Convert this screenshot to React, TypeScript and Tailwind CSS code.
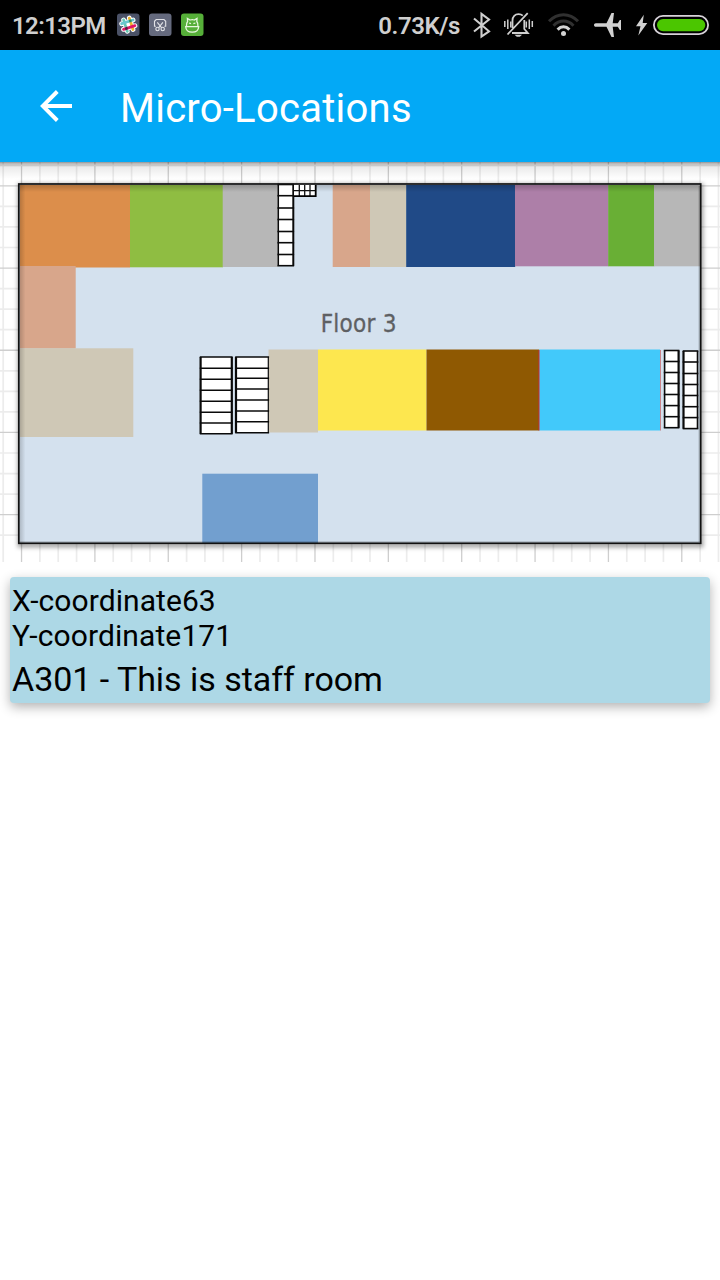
type Room = { x: number; y: number; w: number; h: number; fill: string };

const rooms: Room[] = [
  { x: 20, y: 185, w: 110, h: 82.5, fill: "#dc8e4b" },
  { x: 130, y: 185, w: 93, h: 82.3, fill: "#8fbd42" },
  { x: 222.7, y: 185, w: 55.5, h: 82, fill: "#b7b7b7" },
  { x: 332.7, y: 185, w: 37.5, h: 82, fill: "#d8a68b" },
  { x: 370, y: 185, w: 36.5, h: 82, fill: "#cfc8b6" },
  { x: 406.2, y: 185, w: 109, h: 82, fill: "#204a87" },
  { x: 515, y: 185, w: 93.5, h: 81.3, fill: "#ad7fa8" },
  { x: 608.2, y: 185, w: 46, h: 81.3, fill: "#69af35" },
  { x: 654, y: 185, w: 46.5, h: 81.3, fill: "#b7b7b7" },
  { x: 20, y: 266, w: 55.7, h: 82.5, fill: "#d8a68b" },
  { x: 20, y: 348.3, w: 113.3, h: 88.7, fill: "#cfc8b6" },
  { x: 268.5, y: 349.5, w: 49.5, h: 83, fill: "#cfc8b6" },
  { x: 318, y: 349.5, w: 108.5, h: 81, fill: "#fde74f" },
  { x: 426.5, y: 349.5, w: 112.7, h: 81, fill: "#8f5902" },
  { x: 539.2, y: 349.5, w: 121, h: 81, fill: "#42c9fa" },
  { x: 202.3, y: 473.7, w: 115.7, h: 69.3, fill: "#729fcf" },
];

const verticals = Array.from({ length: 40 }, (_, i) => ({ x: 3.2 + i * 18.34, major: i % 4 === 1 }));
const horizontals = Array.from({ length: 19 }, (_, i) => ({ y: 165.3 + i * 20.55, major: i % 4 === 1 }));

type StairsProps = { x: number; y: number; w: number; ys: number[]; l?: number; r?: number };

function Stairs({ x, y, w, ys, l = 2.2, r = 2.2 }: StairsProps) {
  const end = ys[ys.length - 1];
  return (
    <g stroke="#0a0a0a" strokeWidth="1.6">
      <rect x={x} y={y} width={w} height={end - y} fill="#fff" stroke="none" />
      {[y, ...ys].map((v) => (
        <path key={v} d={`M${x - 0.8} ${v}H${x + w + 0.8}`} />
      ))}
      <path d={`M${x} ${y}V${end}`} strokeWidth={l} />
      <path d={`M${x + w} ${y}V${end}`} strokeWidth={r} />
    </g>
  );
}

function FloorPlan() {
  return (
    <svg className="block h-[400px] w-full" viewBox="0 162 720 400">
      <defs>
        <linearGradient id="barShadow" x1="0" y1="0" x2="0" y2="1">
          <stop offset="0" stopOpacity=".42" />
          <stop offset=".12" stopOpacity=".22" />
          <stop offset=".3" stopOpacity=".08" />
          <stop offset="1" stopOpacity="0" />
        </linearGradient>
        <linearGradient id="edgeTop" x1="0" y1="0" x2="0" y2="1">
          <stop offset="0" stopOpacity=".2" />
          <stop offset="1" stopOpacity="0" />
        </linearGradient>
        <linearGradient id="edgeLeft" x1="0" y1="0" x2="1" y2="0">
          <stop offset="0" stopOpacity=".2" />
          <stop offset="1" stopOpacity="0" />
        </linearGradient>
        <filter id="soft" x="-5%" y="-5%" width="110%" height="110%">
          <feGaussianBlur stdDeviation="2.3" />
        </filter>
      </defs>
      <rect y="162" width="720" height="400" fill="#fff" />
      {verticals.map((v) => (
        <path key={v.x} d={`M${v.x} 162V562`} stroke={v.major ? "#cecece" : "#ececec"} strokeWidth={v.major ? 1.3 : 1.7} />
      ))}
      {horizontals.map((v) => (
        <path key={v.y} d={`M0 ${v.y}H720`} stroke={v.major ? "#cecece" : "#ececec"} strokeWidth={v.major ? 1.3 : 1.7} />
      ))}
      <rect x="20" y="186" width="681" height="359" fill="none" stroke="#000" strokeOpacity=".36" strokeWidth="5" filter="url(#soft)" />
      <rect x="19" y="184.3" width="681.5" height="359" fill="#d4e1ee" />
      {rooms.map((r) => (
        <rect key={`${r.x}-${r.y}`} x={r.x} y={r.y} width={r.w} height={r.h} fill={r.fill} />
      ))}
      <rect x="19" y="185" width="681" height="7" fill="url(#edgeTop)" />
      <rect x="19" y="185" width="6.5" height="358" fill="url(#edgeLeft)" />
      <path d="M20 542H700" stroke="#000" strokeOpacity=".2" strokeWidth="1.5" />
      <path d="M699.3 186V542" stroke="#000" strokeOpacity=".2" strokeWidth="1.5" />
      <path d="M539 350V430.5" stroke="#c52c3c" strokeWidth="1" />
      <path d="M660.5 350V430.5" stroke="#c98287" strokeWidth="1" />
      <Stairs x={278.3} y={184.5} w={15} ys={[195.7, 208, 219.5, 231.5, 242.7, 254.5, 265.7]} l={1.5} r={2} />
      <rect x="294" y="184.5" width="22" height="12" fill="#fff" />
      <path d="M294 190.7H316M299.3 185V196M304.7 185V196M310 185V196" stroke="#111" strokeWidth="1.3" />
      <path d="M294 196.2H315.7V185" fill="none" stroke="#000" strokeWidth="1.8" />
      <Stairs x={200.6} y={357} w={31.2} ys={[368.3, 379.3, 390.3, 401.3, 412.2, 423, 433.8]} />
      <Stairs x={236} y={357} w={32.3} ys={[368.2, 378.3, 389, 400, 411, 421.8, 432.8]} r={1.2} />
      <Stairs x={664.6} y={350.5} w={14} ys={[361.5, 372.5, 383.5, 394.5, 405.6, 416.7, 427.7]} l={1.6} />
      <Stairs x={683.5} y={351} w={14} ys={[362, 373.5, 384.5, 395.5, 406.7, 417.6, 428.6]} r={1.6} />
      <rect x="18.8" y="184" width="681.9" height="359.3" fill="none" stroke="#111" strokeWidth="1.7" />
      <text
        x="320.7"
        y="331.5"
        fontSize="24"
        letterSpacing="0.25"
        fill="#5e6063"
        stroke="#5e6063"
        strokeWidth=".3"
        className="font-['DejaVu_Sans_Condensed','DejaVu_Sans',sans-serif] [font-stretch:condensed]"
      >
        Floor 3
      </text>
      <rect y="162" width="720" height="17" fill="url(#barShadow)" />
    </svg>
  );
}

function NotificationIcons() {
  return (
    <svg className="ml-[10px] block h-[50px] w-[88px] shrink-0" viewBox="116 0 88 50" fill="none">
      <rect x="117" y="13.5" width="22.5" height="22.5" rx="3" fill="#4b5267" />
      <g transform="rotate(-18 128.3 24.7)" strokeLinecap="round">
        <path d="M125.3 18.7V30.7M131.3 18.700V30.700M122.300 21.700H134.300M122.300 27.700H134.300" stroke="#fff" strokeWidth="4.800" />
        <path d="M125.300 18.700V30.700" stroke="#65c9b5" strokeWidth="2.800" />
        <path d="M131.300 18.700V30.700" stroke="#edb52d" strokeWidth="2.800" />
        <path d="M122.300 21.700H134.300" stroke="#68c7cf" strokeWidth="2.800" />
        <path d="M122.300 27.700H134.300" stroke="#e01765" strokeWidth="2.800" />
        <path d="M131.300 21.700h.1" stroke="#2f8f5f" strokeWidth="2.800" />
        <path d="M125.300 27.700h.1" stroke="#542143" strokeWidth="2.800" />
        <path d="M128.300 24.700h.1" stroke="#fff" strokeWidth="3" />
      </g>
      <rect x="149" y="13.5" width="22.5" height="22.5" rx="3" fill="#656a7e" />
      <g stroke="#e2e3e8" strokeWidth="1.1">
        <path d="M155.800 26.300h-1.300v-5l1.700-1.800h7.800l1.700 1.800v5h-1.300M157.300 22.300l4.200 5.400M162.900 22.300l-4.200 5.400" />
        <circle cx="157.500" cy="29" r="1.700" />
        <circle cx="162.700" cy="29" r="1.700" />
      </g>
      <rect x="181" y="13.5" width="22.5" height="22.5" rx="3" fill="#56af39" />
      <g stroke="#e8f7df" strokeWidth="1.3">
        <path d="M186.500 26c-.2-2 .3-3.500 1.100-4.500l-.2-3 2.700 1.500c1.200-.4 3-.4 4.200 0l2.700-1.500-.2 3c.8 1 1.300 2.500 1.100 4.500" />
        <path d="M185.700 26.700h13c-.2 3.300-2.800 5.500-6.500 5.500s-6.300-2.200-6.500-5.500Z" />
        <path d="M189 23l2 .7M195.400 23l-2 .7" />
      </g>
    </svg>
  );
}

function SystemIcons() {
  return (
    <svg className="block h-[50px] w-[250px] shrink-0" viewBox="470 0 250 50" fill="none">
      <path d="M474 18.5L489 31.3L481.500 36.500V13.800L489 19.500L474 31.500" stroke="#cfcfcf" strokeWidth="2.1" />
      <g stroke="#cfcfcf" strokeWidth="1.8">
        <path d="M504.800 21v6M507.800 19.500v9.500M510.800 21.500v6M526.300 21.500v6M529.300 19.500v9.500M532.300 21v6" strokeWidth="1.5" />
        <path d="M512.500 28V20.500c0-4 2.500-6.300 6-6.300 1.600 0 3.200.5 4.300 1.500M524.300 20v9l3.500 4H512M527.700 13.200L507.500 34.500" />
      </g>
      <path d="M514.500 34.800h7.500l-2.200 2h-3Z" fill="#cfcfcf" />
      <path d="M549 21.300c8.500-8.700 20.500-8.700 29 0M553.500 25.700c6-6.200 14-6.200 20 0" stroke="#303030" strokeWidth="3" />
      <path d="M557.600 29.600c3.600-3.700 8.200-3.700 11.800 0" stroke="#d3d3d3" strokeWidth="3" />
      <circle cx="563.5" cy="33.5" r="2.5" fill="#d3d3d3" />
      <path d="M594 25c0-1.100.8-1.800 1.800-1.800h10.700L611.500 13h2.500l-1.300 10.200h5.100l2-3.200h1.200v10h-1.200l-2-3.200h-5.100L614 37h-2.500l-5-10.200h-10.700c-1 0-1.800-.7-1.800-1.800Z" fill="#d1d1d1" />
      <path d="M643.800 14.800L636 26.200h4.500l-2.200 9.200L647.300 23h-4.600Z" fill="#d1d1d1" />
      <rect x="653.9" y="15.9" width="54.2" height="18.2" rx="9.1" stroke="#d7d2d9" strokeWidth="1.8" />
      <rect x="657" y="19" width="48.3" height="12.2" rx="6.1" fill="#4bc600" />
    </svg>
  );
}

export default function App() {
  return (
    <div className="flex min-h-screen w-full flex-col bg-white font-[Roboto,sans-serif]">
      <div className="flex h-[50px] items-center bg-black text-2xl font-semibold text-[#cfcfcf]">
        <span className="ml-3 w-[94px] whitespace-nowrap pt-0.5 tracking-[-0.6px]">12:13PM</span>
        <NotificationIcons />
        <span className="ml-auto mr-[10px] whitespace-nowrap pt-0.5 tracking-[-0.4px]">0.73K/s</span>
        <SystemIcons />
      </div>
      <header className="flex h-28 items-center bg-[#03a9f6] text-white">
        <svg className="ml-10 block h-8 w-8 shrink-0" viewBox="0 0 32 32" fill="none" stroke="currentColor" strokeWidth="3.9">
          <path d="M32 16H2.700M17.300 1.500L2.800 16l14.500 14.500" />
        </svg>
        <h1 className="ml-[48px] pt-1.5 text-[40px] leading-[48px] tracking-[0.25px]">Micro-Locations</h1>
      </header>
      <FloorPlan />
      <div className="mx-2.5 mt-[15px] h-[126px] rounded-[4px] bg-[#add8e6] pl-0.5 pt-[6px] text-[30px] leading-[35px] text-black shadow-[0_4px_12px_rgba(0,0,0,0.3)]">
        <p className="tracking-[0.07px]">X-coordinate63</p>
        <p className="tracking-[0.1px]">Y-coordinate171</p>
        <p className="mt-[6px] text-[34px] leading-10 tracking-[-0.03px]">A301 - This is staff room</p>
      </div>
    </div>
  );
}
